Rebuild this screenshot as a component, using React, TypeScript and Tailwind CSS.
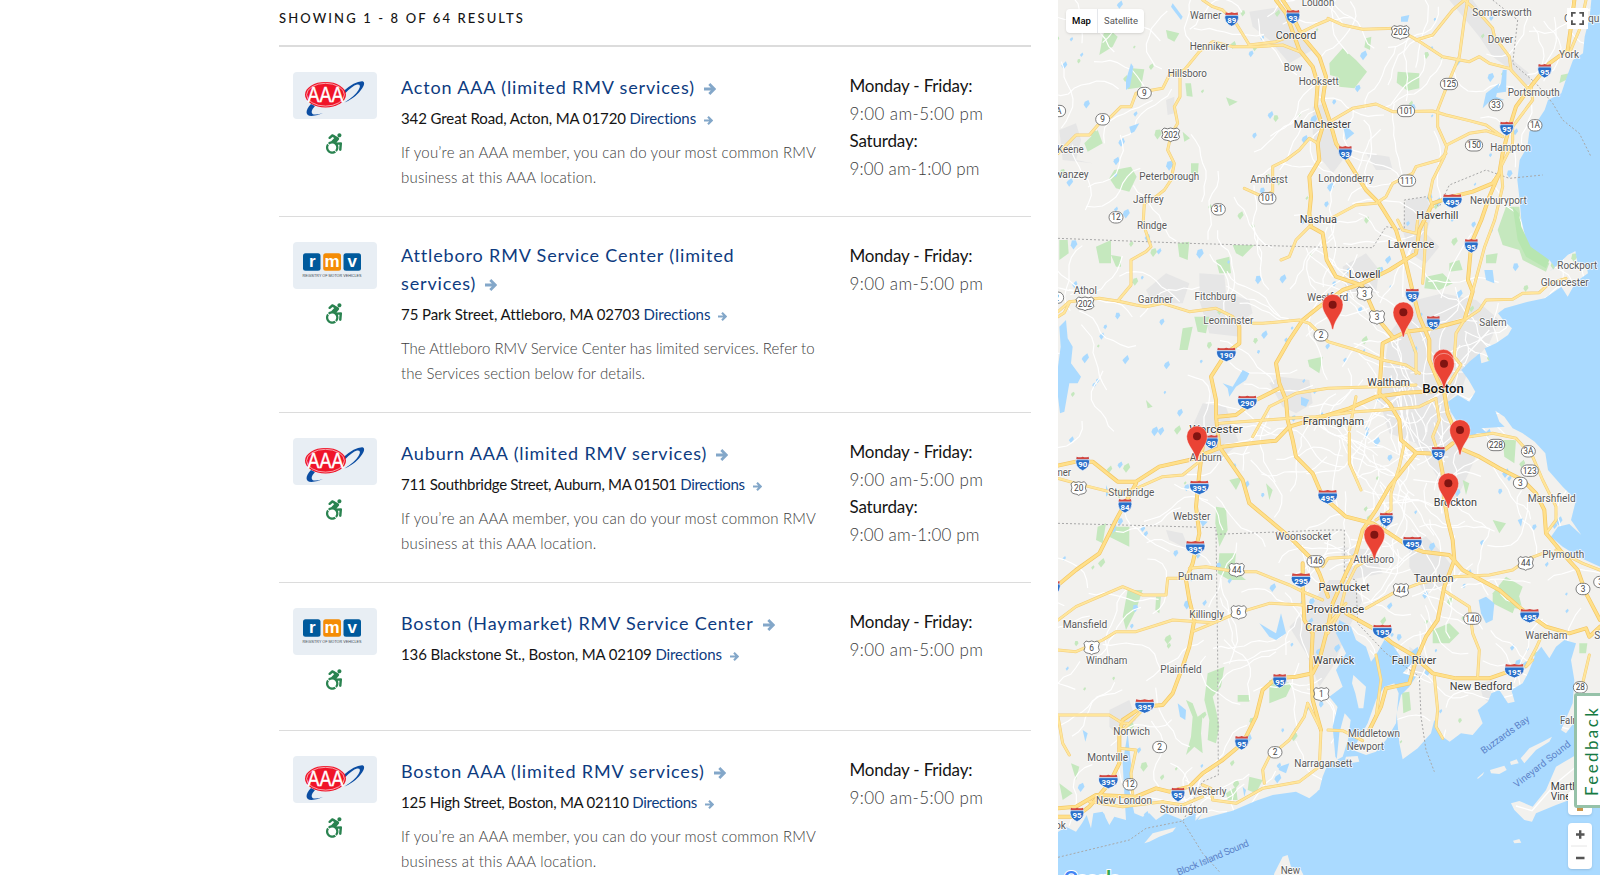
import { FaAccessibleIcon } from 'react-icons/fa';

type Pt = string;
type Kind = 'aaa' | 'rmv';

const weekdays = { days: 'Monday - Friday:', time: '9:00 am-5:00 pm', timeSpacing: 'tracking-[0.400px]' };
const saturday = { days: 'Saturday:', time: '9:00 am-1:00 pm', timeSpacing: 'tracking-[0.150px]' };
const aaaText = [
  'If you’re an AAA member, you can do your most common RMV',
  'business at this AAA location.',
];

const locations = [
  {
    kind: 'aaa' as Kind,
    title: ['Acton AAA (limited RMV services)'],
    address: '342 Great Road, Acton, MA 01720',
    addressSpacing: 'tracking-[-0.100px]',
    text: aaaText,
    hours: [weekdays, saturday],
    height: 'h-[170px]',
  },
  {
    kind: 'rmv' as Kind,
    title: ['Attleboro RMV Service Center (limited', 'services)'],
    address: '75 Park Street, Attleboro, MA 02703',
    addressSpacing: 'tracking-[-0.070px]',
    text: [
      'The Attleboro RMV Service Center has limited services. Refer to',
      'the Services section below for details.',
    ],
    hours: [weekdays],
    height: 'h-[196px]',
  },
  {
    kind: 'aaa' as Kind,
    title: ['Auburn AAA (limited RMV services)'],
    address: '711 Southbridge Street, Auburn, MA 01501',
    addressSpacing: 'tracking-[-0.290px]',
    text: aaaText,
    hours: [weekdays, saturday],
    height: 'h-[170px]',
  },
  {
    kind: 'rmv' as Kind,
    title: ['Boston (Haymarket) RMV Service Center'],
    address: '136 Blackstone St., Boston, MA 02109',
    addressSpacing: 'tracking-[-0.110px]',
    text: [],
    hours: [weekdays],
    height: 'h-[148px]',
  },
  {
    kind: 'aaa' as Kind,
    title: ['Boston AAA (limited RMV services)'],
    address: '125 High Street, Boston, MA 02110',
    addressSpacing: 'tracking-[-0.270px]',
    text: aaaText,
    hours: [weekdays],
    height: 'h-[170px]',
  },
];

// Map data, in a 1632 x 2625 space
const sea: Pt =
  '1606,0 1601,50 1586,110 1581,160 1551,180 1531,235 1516,280 1476,300 1466,330 1440,370 1420,395 1414,440 1391,480 1384,540 1391,600 1396,660 1408,710 1430,760 1480,780 1496,800 1480,815 1510,790 1535,765 1558,754 1564,785 1592,800 1596,820 1560,845 1535,890 1516,860 1466,895 1416,905 1346,925 1326,940 1346,965 1368,985 1356,1005 1320,1030 1286,1045 1301,1082 1276,1090 1271,1060 1240,1085 1216,1110 1238,1140 1258,1175 1240,1205 1205,1185 1176,1205 1184,1235 1215,1285 1250,1315 1262,1300 1296,1300 1276,1285 1346,1280 1330,1265 1318,1232 1345,1250 1370,1285 1400,1300 1436,1325 1468,1360 1476,1410 1520,1460 1560,1500 1545,1560 1576,1605 1540,1572 1506,1580 1485,1610 1520,1640 1576,1675 1632,1700 1640,1700 1640,0';
const southSea: Pt =
  '0,2500 30,2480 60,2495 78,2470 92,2445 105,2485 112,2440 140,2435 160,2475 175,2450 210,2460 205,2380 200,2290 215,2200 225,2290 220,2370 235,2440 260,2450 280,2440 300,2460 330,2440 380,2460 420,2435 418,2462 440,2440 425,2460 530,2432 600,2402 650,2385 720,2375 760,2395 790,2370 800,2330 816,2290 850,2285 880,2290 910,2285 905,2268 870,2270 860,2300 838,2270 830,2180 845,2120 820,2090 860,2060 840,2010 870,1960 840,1900 850,1860 885,1880 900,1920 930,1940 945,1985 960,1965 985,1920 1010,1935 1040,1980 1060,1960 1085,1940 1090,1965 1040,2020 1080,2030 1060,2060 1035,2085 1022,2140 1030,2230 1040,2278 1085,2245 1125,2200 1135,2160 1160,2210 1181,2225 1215,2200 1250,2205 1280,2170 1265,2130 1296,2105 1306,2080 1330,2070 1356,2110 1376,2105 1366,2070 1400,2050 1416,2020 1430,1985 1440,1960 1456,1940 1480,1975 1500,1940 1525,1920 1560,1930 1545,1980 1555,2040 1550,2110 1515,2190 1530,2200 1560,2160 1632,2150 1640,2625 0,2625';

const islands: Pt[] = [
  '985,2060 1015,2050 1028,2080 1020,2170 990,2220 960,2255 930,2265 890,2250 935,2170 960,2100',
  '892,2025 930,2060 922,2125 908,2125 898,2080 888,2050',
  '866,2140 884,2160 876,2220 860,2270 842,2280 850,2200',
  '1263,2335 1285,2315 1280,2325 1266,2336',
  '1302,2310 1345,2297 1352,2310 1330,2322 1305,2320',
  '1362,2285 1382,2278 1388,2290 1365,2295',
  '1394,2275 1420,2245 1460,2225 1488,2210 1480,2225 1440,2250 1405,2290',
  '1365,2410 1390,2403 1430,2420 1470,2370 1500,2300 1560,2265 1632,2270 1632,2400 1540,2400 1500,2415 1440,2440 1428,2465 1405,2460 1375,2430',
  '1371,2522 1390,2517 1396,2528 1375,2530',
  '265,2530 290,2500 360,2482 350,2495 310,2510 280,2525',
  '655,2620 680,2570 695,2565 705,2600 735,2610 750,2640 650,2640',
];

const urban: Pt[] = [
  '580,35 680,20 700,60 740,110 770,150 700,190 640,120 590,80',
  '770,320 810,310 830,400 860,480 830,520 790,470 770,400',
  '1180,0 1250,0 1310,80 1330,130 1370,180 1420,220 1430,280 1380,220 1310,170 1270,110',
  '10,390 60,370 75,420 60,480 110,490 20,480',
  '330,300 355,290 355,340 335,345',
  '930,460 1000,470 1010,510 960,510',
  '1050,600 1110,590 1130,640 1110,700 1150,740 1110,790 1060,760 1040,690',
  '430,820 505,825 510,880 580,900 590,940 560,960 550,1010 460,1000 430,900',
  '270,870 330,820 400,850 380,910 290,910',
  '860,800 930,760 970,810 960,880 870,880',
  '1080,900 1160,880 1260,900 1330,960 1300,1030 1240,1100 1220,1160 1180,1200 1200,1330 1250,1360 1230,1400 1150,1440 1080,1330 1000,1300 970,1200 1000,1000',
  '670,1130 760,1140 770,1210 720,1240 680,1220 640,1150',
  '400,1300 440,1210 510,1220 530,1280 550,1330 490,1380 430,1370',
  '1060,1630 1110,1610 1150,1650 1190,1700 1170,1760 1100,1770 1060,1700',
  '700,1880 760,1820 820,1740 880,1740 920,1800 880,1880 830,2000 790,2060 750,1960',
  '850,1640 950,1650 980,1720 880,1740',
  '330,1590 380,1600 400,1650 340,1620',
  '160,2130 220,2100 240,2160 190,2210 160,2180',
  '1270,2050 1310,2040 1300,2110 1280,2090',
  '1060,1940 1120,1980 1100,2030 1060,2020',
  '1160,1350 1260,1370 1210,1480 1170,1530 1140,1440',
];

const parks: Pt[] = [
  '228,205 265,208 255,262 215,268 218,230',
  '175,510 225,500 242,530 220,575 180,565 160,535',
  '330,90 370,100 355,125 335,115',
  '388,250 405,250 410,290 392,288',
  '85,430 125,390 140,430 95,455',
  '150,80 185,110 170,140 130,165 140,110',
  '510,292 545,305 520,318',
  '380,395 402,415 385,425',
  '405,490 428,490 425,528 405,520',
  '820,190 860,145 900,180 933,215 895,265 850,260 840,230 822,225',
  '1025,215 1090,220 1090,265 1055,272 1022,248',
  '930,115 946,110 942,150 925,142',
  '1515,225 1540,220 1530,240 1510,250',
  '1350,620 1390,620 1396,680 1420,750 1480,790 1470,815 1400,780 1390,750 1340,735 1325,690',
  '1110,830 1160,820 1190,850 1150,870 1105,865',
  '1290,765 1325,760 1320,790 1290,790',
  '1180,790 1210,780 1220,810 1180,815',
  '120,740 165,720 165,790 130,790',
  '165,765 195,770 195,800 180,800',
  '10,720 35,720 38,760 10,780',
  '365,730 400,725 395,780 370,770',
  '530,735 595,735 560,770 540,760',
  '480,780 520,770 525,820 490,820',
  '380,985 410,980 395,1050 370,1050',
  '415,950 460,950 450,1000 425,995',
  '755,1080 800,1070 790,1120 760,1100',
  '270,1200 290,1220 275,1225',
  '125,1580 150,1570 140,1630 120,1620',
  '170,1580 220,1580 220,1640 160,1610',
  '480,1520 510,1525 515,1590 490,1640 478,1570',
  '490,1660 540,1660 535,1710 570,1740 520,1740 485,1720',
  '215,1770 260,1770 240,1830 210,1890 200,1850',
  '300,1790 315,1790 310,1840 298,1830',
  '520,1440 560,1430 540,1470',
  '630,1450 650,1470 640,1500',
  '1340,1320 1380,1320 1375,1390 1345,1370',
  '1220,1440 1240,1450 1230,1485',
  '1310,1560 1350,1570 1330,1600',
  '1310,1780 1350,1730 1400,1760 1370,1840 1310,1810',
  '1130,1890 1180,1870 1210,1900 1180,1930 1130,1930',
  '1350,1790 1390,1790 1400,1830 1360,1820',
  '1570,1930 1594,1930 1590,1960 1570,1960',
  '455,2020 505,2000 495,2060 470,2090 480,2130 490,2180 480,2230 455,2220 460,2160 445,2100',
  '390,2100 410,2110 425,2150 440,2140 435,2200 440,2260 415,2240 390,2265 405,2210 410,2150',
  '640,2040 710,2050 690,2090 640,2110',
  '545,2085 580,2085 580,2105 545,2105',
  '10,2350 50,2380 20,2400',
  '45,2290 70,2300 60,2340',
  '510,2380 540,2360 545,2400 515,2400',
  '580,2330 620,2340 600,2380 575,2370',
  '1038,2078 1060,2075 1065,2130 1042,2140',
  '1430,1960 1460,1950 1450,1990',
];

const lakes: Pt[] = [
  '10,980 30,960 35,1015 50,1040 45,1090 75,1130 65,1150 40,1150 25,1235 12,1240 6,1190 6,1100 14,1040',
  '500,1150 530,1160 560,1110 580,1120 570,1140 540,1160 520,1190 515,1165',
  '210,240 225,190 232,200 222,260 210,270',
  '350,10 380,50 375,60 345,20',
  '220,380 250,370 235,395 225,400',
  '1290,280 1330,250 1320,290 1345,300 1300,305 1280,325',
  '1035,50 1060,45 1055,65 1035,65',
  '1285,810 1310,810 1315,850 1290,840',
  '1340,210 1352,210 1350,275 1318,280 1335,250',
  '610,1870 660,1900 675,1840 690,1900 660,1920 640,1910',
  '1268,1800 1290,1790 1315,1810 1310,1860 1290,1870 1275,1840',
  '170,1560 180,1590 170,1600',
  '365,2110 390,2130 388,2160 372,2150',
  '670,2300 700,2290 690,2320 668,2310',
  '560,2360 570,2370 565,2390',
  '80,2190 95,2200 88,2225',
  '735,1190 760,1200 750,1220 735,1215',
  '860,370 895,400 870,420',
  '150,1455 160,1480 150,1490',
  '430,1560 455,1565 440,1580',
  '1385,1560 1400,1555 1395,1580',
];

// main roads
const roads: Pt[] = [
  '440,0 470,20 500,30 540,70 580,135',
  '6,460 60,405 100,405 130,370 165,350 195,320 225,320 240,280 290,270 320,265 340,225 385,210 430,155 470,125 530,140 600,140 680,135 730,155',
  '372,215 372,290 355,320 365,370 345,405 335,450 355,490 345,540 325,570 300,590 265,610 262,660 268,690 285,740 270,755 225,780 225,855 185,903',
  '580,135 660,125 740,95 780,75 816,60',
  '822,365 890,325 960,312 1010,335 1130,333 1170,345 1240,362 1290,375 1340,410',
  '816,55 860,75 920,88 1020,85 1080,118 1160,170 1240,185 1270,170 1300,190 1360,205',
  '1080,120 1130,105 1190,30 1225,0',
  '1235,0 1225,60 1210,170 1180,240 1145,330 1145,380 1172,440 1165,470 1130,540 1120,590 1130,620',
  '1225,0 1270,40 1310,85 1315,110 1360,170 1365,210 1420,270',
  '1425,260 1430,300 1370,380 1370,430 1335,500 1340,560 1316,660 1286,740 1251,870',
  '1590,0 1570,90 1540,160',
  '816,660 900,615 960,610 990,590 1010,550 1070,520 1080,500 1150,480 1170,460',
  '1172,435 1240,400 1290,392 1340,410',
  '565,565 620,590 650,575 650,500 690,480 730,450 760,415 785,430',
  '675,780 700,770 720,720 760,680',
  '6,935 40,905 130,895 185,903 240,915 270,920 320,910 400,935 480,925 530,950 550,980',
  '6,950 25,938 40,908',
  '590,970 620,970 730,960 760,970 816,1025 900,1050 980,1080 1050,1095 1090,1120',
  '490,1270 600,1262 700,1255 780,1250 900,1235 980,1230 1090,1220 1140,1195',
  '590,1310 640,1220 720,1180 816,1165 960,1160 1080,1155',
  '1225,960 1270,930 1290,900 1370,898 1400,880 1450,878 1480,850 1530,835',
  '1225,960 1200,1000 1195,1070 1215,1095 1180,1150',
  '1045,1330 1030,1400 1005,1480 1005,1530 960,1560',
  '1240,1310 1310,1300 1380,1315 1430,1370 1460,1440 1500,1520 1500,1560 1470,1600',
  '1195,1730 1300,1725 1370,1710 1420,1675 1460,1660 1500,1662',
  '930,1825 1010,1780 1090,1750 1195,1730',
  '1500,1650 1580,1690 1632,1710',
  '1170,1775 1240,1820 1250,1900 1270,1950 1265,2030',
  '6,1435 60,1450 120,1465 160,1475 230,1470 320,1430 380,1425 430,1385',
  '400,1705 450,1700 540,1715 600,1715 700,1755 740,1775 800,1800',
  '410,1895 470,1870 540,1840 640,1810 740,1815',
  '6,1860 60,1820 200,1760 260,1785 330,1785 335,1735 390,1735',
  '6,1950 60,1955 140,1920 180,1895 240,1895 350,1860 470,1868',
  '6,2145 90,2145 160,2145 200,2170 215,2170',
  '6,2150 20,2230 40,2265',
  '320,2405 380,2415 440,2390',
  '100,2405 200,2420 320,2405',
  '440,2355 465,2365 470,2400 540,2410 620,2365 730,2345 790,2300 795,2190 755,2110',
  '625,2350 620,2310 640,2270 700,2220 745,2150 755,2110',
  '190,2245 240,2250 225,2320 230,2380',
  '816,1900 850,1840 870,1760 900,1700 950,1670',
  '800,1700 816,1675 900,1670',
  '780,1890 820,1870 870,1810',
  '816,2190 860,2192 920,2222',
  '1135,2030 1145,2130 1140,2180 1160,2215',
  '960,1965 975,2040 960,2150',
  '1050,980 1080,1060 1080,1120',
  '1140,1200 1150,1260 1130,1310 1140,1340',
  '880,1300 880,1390 915,1470',
  '900,1190 880,1290',
  '1600,1965 1580,2050',
  '1430,1980 1410,2000 1440,1945 1460,1900',
  '1025,660 1040,690 1080,700 1085,660',
  '1110,670 1105,780 1100,850',
  '260,2130 190,2200',
];

const highways: Pt[] = [
  '660,0 690,40 730,150 770,200 785,250 780,320 800,380 785,430 790,480 760,530 765,590 760,640 765,680 800,700 812,780 840,830 900,850 920,860 960,950 1010,1010',
  '680,0 700,30 740,110 790,170 810,230 800,300 822,365 840,430 880,490 930,570 970,610 1020,690 1050,790 1069,870 1090,950 1120,1020 1120,1080 1145,1140 1165,1180 1175,1240 1200,1300 1212,1345 1270,1370 1330,1405 1400,1440 1440,1480 1465,1530 1470,1600 1520,1660 1565,1710 1590,1780 1632,1860',
  '1555,0 1545,80 1535,150 1480,190 1420,265 1380,320 1355,400 1340,460 1330,520 1300,590 1276,660 1246,730 1236,840 1250,875 1225,960 1170,975 1130,985 1050,995 980,1030 975,1100 970,1180 1000,1210 1030,1260 1035,1320 1080,1358 1150,1362 1190,1330',
  '1330,520 1310,550 1250,575 1190,590 1130,610 1090,690 1080,760 1000,810 920,850 860,870 820,900 790,920 740,960 700,1020 660,1090 670,1150 690,1200 695,1260 710,1320 720,1370 770,1420 800,1490 870,1550 950,1570 1000,1600 1060,1640 1100,1655 1180,1665 1220,1710 1330,1770 1400,1830 1470,1880 1540,1900 1590,1885 1600,1910 1632,1880',
  '550,980 550,1030 510,1060 465,1130 480,1200 480,1250 490,1340 560,1440 580,1510 640,1560 700,1610 740,1650 770,1680 790,1720 816,1790',
  '485,1250 540,1245 600,1200 670,1165',
  '6,1397 60,1385 110,1385 185,1445 240,1445 310,1400 400,1380 500,1340 600,1328 660,1322 700,1280 816,1245 880,1225 960,1190 1050,1178 1160,1172',
  '1080,1360 1000,1460 960,1530 920,1590 900,1660 870,1720 830,1810 816,1880 790,1980 770,2020 720,2030 660,2035 620,2070 600,2150 560,2230 500,2280 440,2320 400,2360 340,2375 300,2365 240,2390 120,2385 60,2420 6,2425',
  '1150,1365 1160,1420 1165,1500 1175,1560 1190,1620 1195,1680 1165,1760 1145,1860 1110,1910 1080,1980 1060,2050 990,2065 975,2120 940,2190',
  '870,1840 960,1890 1010,1930 1070,1965 1130,2020 1200,2035 1300,2035 1400,2000',
  '440,1340 430,1420 420,1520 430,1600 410,1690 390,1740 400,1800 415,1860 400,1940 380,2000 350,2080 320,2115 260,2120 200,2160 190,2200 190,2290 160,2350 100,2420 60,2450 6,2450',
  '240,1450 180,1560 130,1660 60,1710 6,1755',
  '740,1690 740,1760 745,1860 770,1900 765,2000 770,2100 795,2190',
];

const borders: Pt[] = [
  '6,715 400,730 816,742 950,743 990,680 1045,690 1045,600 1110,590 1150,620 1180,555 1290,510 1360,535 1460,525',
  '6,1570 200,1575 480,1583 485,1965 487,2325 440,2345 380,2465',
  '480,1603 816,1590 865,1590 865,1730 900,1740 905,1870 990,1960 1090,2030 1095,2150 1110,2250 1135,2315',
  '1310,0 1385,60 1370,190 1440,250 1490,310 1520,360 1570,400 1605,470',
  '6,2572 220,2520 270,2485 380,2463 440,2560 490,2615',
];

type Label = [string, number, number, number, number?];
const labels: Label[] = [
  ['Warner', 449, 56, 94], ['Concord', 720, 116, 122, 34], ['Henniker', 460, 151, 118], ['Bow', 711, 212, 56],
  ['Hooksett', 788, 254, 120], ['Hillsboro', 394, 231, 118], ['Manchester', 799, 384, 172, 34], ['Keene', 43, 460, 80],
  ['Swanzey', 38, 534, 120], ['Peterborough', 340, 540, 180], ['Amherst', 639, 550, 112], ['Londonderry', 870, 547, 166],
  ['Jaffrey', 277, 610, 92], ['Nashua', 787, 670, 112, 34], ['Rindge', 288, 688, 90], ['Loudon', 786, 18, 98],
  ['Somersworth', 1338, 48, 178], ['Ogunquit', 1586, 66, 124], ['Dover', 1333, 129, 76], ['York', 1539, 174, 60],
  ['Portsmouth', 1433, 288, 156], ['Hampton', 1364, 454, 122], ['Newburyport', 1327, 612, 170], ['Haverhill', 1144, 658, 126, 34],
  ['Athol', 88, 882, 70], ['Gardner', 298, 908, 105], ['Fitchburg', 478, 899, 125], ['Leominster', 517, 971, 150],
  ['Westford', 815, 903, 124], ['Worcester', 480, 1298, 160, 34], ['Framingham', 832, 1276, 184, 34], ['Lawrence', 1065, 744, 140, 33],
  ['Lowell', 926, 835, 95, 33], ['Rockport', 1564, 806, 120], ['Gloucester', 1526, 857, 144], ['Salem', 1311, 978, 82],
  ['Waltham', 998, 1157, 128, 33], ['Boston', 1161, 1179, 125, 40], ['Auburn', 449, 1382, 96], ['Palmer', 0, 1428, 90],
  ['Sturbridge', 226, 1488, 138], ['Webster', 407, 1560, 112], ['Woonsocket', 742, 1619, 168], ['Putnam', 418, 1739, 104],
  ['Killingly', 452, 1853, 104], ['Mansfield', 87, 1883, 134], ['Windham', 152, 1992, 124], ['Providence', 838, 1839, 174, 34],
  ['Cranston', 814, 1894, 132, 34], ['Pawtucket', 864, 1774, 153, 34], ['Brockton', 1198, 1519, 130, 34], ['Marshfield', 1487, 1507, 144],
  ['Plymouth', 1522, 1674, 126], ['Attleboro', 953, 1689, 122], ['Taunton', 1133, 1746, 120, 34], ['Wareham', 1471, 1917, 126],
  ['Sandwich', 1680, 1917, 130], ['Plainfield', 375, 2018, 124], ['Warwick', 833, 1991, 124, 34], ['Norwich', 227, 2206, 110],
  ['Montville', 155, 2282, 122], ['New London', 204, 2412, 168], ['Stonington', 383, 2438, 144], ['Westerly', 454, 2386, 114],
  ['Narragansett', 802, 2300, 174], ['Old Saybrook', -60, 2487, 180], ['New', 703, 2623, 58], ['Fall River', 1074, 1991, 134, 33],
  ['New Bedford', 1275, 2071, 188, 34], ['Middletown', 954, 2212, 156], ['Newport', 928, 2249, 112], ['Falmouth', 1572, 2171, 120],
  ['Martha’s', 1543, 2369, 118, 33], ['Vineyard', 1543, 2400, 118, 33],
];

const interstates: [string, number, number][] = [
  ['89', 527, 57], ['93', 711, 50], ['95', 1466, 212], ['95', 1352, 385], ['93', 868, 458], ['495', 1189, 603],
  ['95', 1246, 737], ['93', 1069, 886], ['95', 1132, 968], ['190', 511, 1063], ['290', 574, 1207], ['90', 466, 1325],
  ['90', 80, 1390], ['84', 207, 1517], ['395', 430, 1462], ['395', 418, 1643], ['84', -8, 1763], ['495', 815, 1490],
  ['95', 991, 1558], ['495', 1069, 1630], ['93', 1147, 1360], ['295', 735, 1740], ['195', 979, 1894], ['495', 1421, 1847],
  ['195', 1375, 2012], ['395', 266, 2118], ['95', 671, 2042], ['95', 557, 2228], ['395', 157, 2344], ['95', 366, 2383],
  ['95', 63, 2443],
];

const usRoutes: [string, number, number][] = [
  ['202', 344, 404], ['202', 1033, 97], ['202', 87, 911], ['3', 926, 881], ['3', 963, 952], ['20', 68, 1465],
  ['44', 542, 1710], ['6', 548, 1837], ['6', 107, 1943], ['44', 1035, 1771], ['44', 1409, 1690], ['1', 796, 2083],
];

const stateRoutes: [string, number, number][] = [
  ['9', 265, 279], ['9', 140, 358], ['A', 8, 333], ['12', 180, 652], ['31', 487, 628], ['101', 634, 595],
  ['125', 1179, 252], ['33', 1320, 315], ['101', 1050, 333], ['1A', 1437, 376], ['150', 1254, 436], ['111', 1053, 542],
  ['2', 795, 1006], ['2', 2, 893], ['228', 1320, 1335], ['3A', 1417, 1354], ['123', 1421, 1412], ['3', 1393, 1449],
  ['146', 779, 1684], ['3', 1581, 1767], ['3', 1634, 1746], ['140', 1249, 1856], ['2', 311, 2241], ['12', 222, 2353],
  ['2', 657, 2257], ['28', 1573, 2062],
];

const pins = [[423, 1380], [830, 985], [1042, 1008], [1162, 1150], [1164, 1162], [1212, 1361], [1177, 1521], [955, 1675]];

// local streets and ponds are filler, so a small seeded generator draws them
let seed = 11;
const rand = () => {
  seed = (seed * 16807) % 2147483647;
  return seed / 2147483647;
};

const streets = Array.from({ length: 320 }, (_, i) => {
  const metro = i % 4 === 0;
  let x = metro ? 850 + rand() * 400 : rand() * 1632;
  let y = metro ? 850 + rand() * 1050 : rand() * 2500;
  let a = rand() * 6.28;
  let d = `M${x.toFixed(0)} ${y.toFixed(0)}`;
  for (let n = 0; n < 9; n++) {
    a += (rand() - 0.5) * 1.1;
    x += Math.cos(a) * 24;
    y += Math.sin(a) * 24;
    d += `L${x.toFixed(0)} ${y.toFixed(0)}`;
  }
  return d;
});

const patches = Array.from({ length: 320 }, (_, i) => {
  const x = rand() * 1632;
  const y = rand() * 2450;
  const s = 4 + rand() * 9;
  return { park: i % 3 === 0, d: `M${x} ${y}l${s} ${-s * rand()}l${s * 0.4} ${s}l${-s} ${s * 1.3}l${-s * 0.7} ${-s}Z` };
});

const Interstate = ({ label, x, y }: { label: string; x: number; y: number }) => (
  <g transform={`translate(${x} ${y}) scale(${label.length > 2 ? 1.42 : 1} 1)`}>
    <path d="M-18 -18Q0 -14 18 -18Q24 -4 17 9Q10 18 0 22Q-10 18 -17 9Q-24 -4 -18 -18Z" fill="#2a6fc9" stroke="#fff" strokeWidth="2" />
    <path d="M-18 -20Q-9 -16 0 -20Q9 -16 18 -20L19 -12H-19Z" fill="#d2463f" />
    <path d="M-20 -11H20" stroke="#fff" strokeWidth="2" />
    <text y="12" textAnchor="middle" textLength={label.length > 2 ? 29 : 27} lengthAdjust="spacingAndGlyphs" fontSize="24" fontWeight="700" fill="#fff">{label}</text>
  </g>
);

const UsRoute = ({ label, x, y }: { label: string; x: number; y: number }) => (
  <g transform={`translate(${x} ${y})`}>
    <path
      d="M-17 -20Q-8 -15 0 -20Q8 -15 17 -20L23 -13Q17 0 23 8Q20 17 10 17Q5 17 0 21Q-5 17 -10 17Q-20 17 -23 8Q-17 0 -23 -13Z"
      transform={label.length > 2 ? 'scale(1.16 1)' : undefined}
      fill="#fff" stroke="#666" strokeWidth="2.5"
    />
    <text y="9" textAnchor="middle" fontSize="25" fill="#444">{label}</text>
  </g>
);

const StateRoute = ({ label, x, y }: { label: string; x: number; y: number }) => {
  const w = label.length > 2 ? 52 : 42;
  return (
    <g transform={`translate(${x} ${y})`}>
      <rect x={-w / 2} y="-17" width={w} height="34" rx="17" fill="#fff" stroke="#666" strokeWidth="2.5" />
      <text y="9" textAnchor="middle" fontSize="25" fill="#444">{label}</text>
    </g>
  );
};

function MapCanvas() {
  return (
    <svg viewBox="6 0 1626 2625" className="block h-[875px] w-[542px] bg-[#f2f1ee] font-['Roboto',sans-serif]">
      <g fill="#e6e6e6">{urban.map((p) => <polygon key={p} points={p} />)}</g>
      <g fill="#c5e8be">{parks.map((p) => <polygon key={p} points={p} />)}</g>
      {patches.map((p) => <path key={p.d} d={p.d} fill={p.park ? '#c5e8be' : '#aadaff'} />)}
      <g fill="none" stroke="#fff" strokeWidth="3.5" strokeLinejoin="round">{streets.map((d) => <path key={d} d={d} />)}</g>
      <g fill="#aadaff">
        {lakes.map((p) => <polygon key={p} points={p} />)}
        <polygon points={sea} />
        <polygon points={southSea} />
      </g>
      <g fill="#f2f1ee">{islands.map((p) => <polygon key={p} points={p} />)}</g>
      <polygon points="1370,620 1388,640 1396,680 1424,740 1480,780 1470,805 1410,770 1385,720" fill="#b7e6b0" />
      <path d="M1380 2418L1428 2432L1500 2350L1560 2300M1250 610L1400 600M1300 990L1200 1100" fill="none" stroke="#fff" strokeWidth="4" />
      <g fill="none" stroke="#a8a8a8" strokeWidth="3" strokeDasharray="6 6">{borders.map((p) => <polyline key={p} points={p} />)}</g>
      <g fill="none" strokeLinejoin="round" strokeLinecap="round">
        <g stroke="#f3cd78" strokeWidth="9">{roads.map((p) => <polyline key={p} points={p} />)}</g>
        <g stroke="#f3c766" strokeWidth="12">{highways.map((p) => <polyline key={p} points={p} />)}</g>
        <g stroke="#ffe69c" strokeWidth="6">{roads.map((p) => <polyline key={p} points={p} />)}</g>
        <g stroke="#ffe08a" strokeWidth="8">{highways.map((p) => <polyline key={p} points={p} />)}</g>
      </g>
      {interstates.map(([l, x, y]) => <Interstate key={`${l}-${x}-${y}`} label={l} x={x} y={y} />)}
      {usRoutes.map(([l, x, y]) => <UsRoute key={`${l}-${x}-${y}`} label={l} x={x} y={y} />)}
      {stateRoutes.map(([l, x, y]) => <StateRoute key={`${l}-${x}-${y}`} label={l} x={x} y={y} />)}
      <g textAnchor="middle" stroke="#fff" strokeWidth="5" strokeLinejoin="round" strokeOpacity="0.85" paintOrder="stroke">
        {labels.map(([t, x, y, w, s = 30]) => (
          <text key={t} x={x} y={y} textLength={w} lengthAdjust="spacingAndGlyphs" fontSize={s} fontWeight={s === 40 ? 500 : 400} fill={s === 40 ? '#111' : s > 30 ? '#3c3c3c' : '#5a5a5a'}>
            {t}
          </text>
        ))}
      </g>
      <g textAnchor="middle" fontSize="29" fill="#5b82c8">
        <text transform="translate(1353 2212) rotate(-36)" textLength="172">Buzzards Bay</text>
        <text transform="translate(1464 2300) rotate(-38)" textLength="208">Vineyard Sound</text>
        <text transform="translate(474 2582) rotate(-23)" textLength="232">Block Island Sound</text>
      </g>
      <text x="22" y="2660" fontSize="68" fontWeight="500" textLength="172" stroke="#fff" strokeWidth="6" paintOrder="stroke">
        <tspan fill="#4285f4">G</tspan>
        <tspan fill="#ea4335">o</tspan>
        <tspan fill="#fbbc05">o</tspan>
        <tspan fill="#4285f4">g</tspan>
        <tspan fill="#34a853">l</tspan>
        <tspan fill="#ea4335">e</tspan>
      </text>
      {pins.map(([x, y]) => (
        <g key={`${x}-${y}`} transform={`translate(${x} ${y})`}>
          <path d="M-2 3C-6 -30 -31 -43 -31 -71A31 31 0 1 1 31 -71C31 -43 6 -30 2 3Z" fill="#ea4335" stroke="#fff" strokeWidth="1.5" strokeOpacity="0.8" />
          <circle cy="-71" r="12" fill="#811411" />
        </g>
      ))}
    </svg>
  );
}

const AaaLogo = () => (
  <svg viewBox="0 0 84 47" className="h-[47px] w-[84px]">
    <path d="M50 19.500Q62 9 69.500 9.300Q74 11 66 20.500Q60 27 51.500 30.500Q62 24 65.500 18Q69 12 64 12.500Q59 14 52.500 21Z" fill="#0b4da2" />
    <path d="M18 32C12 38 12 44 18.500 44Q24 44 30 41Q22 43.500 19.500 42Q17 39.500 22 34Z" fill="#0b4da2" />
    <ellipse cx="32.500" cy="22.700" rx="20.500" ry="12.800" fill="#f01428" />
    <ellipse cx="32.500" cy="22.700" rx="18.900" ry="11.400" fill="none" stroke="#fff" strokeWidth="0.600" />
    <text x="32.500" y="30.200" textAnchor="middle" fontSize="21.500" fontWeight="400" fontFamily="Liberation Sans" textLength="36" lengthAdjust="spacingAndGlyphs" fill="#fff" stroke="#fff" strokeWidth="0.400">AAA</text>
  </svg>
);

const RmvLogo = () => (
  <svg viewBox="0 0 84 47" className="h-[47px] w-[84px]">
    <rect x="10" y="11.300" width="17.500" height="17.500" rx="2.500" fill="#005a9c" />
    <rect x="30.200" y="11.300" width="17.800" height="17.500" rx="2.500" fill="#f48c06" />
    <rect x="50.500" y="11.300" width="17.500" height="17.500" rx="2.500" fill="#005a9c" />
    <g fontFamily="Liberation Sans" fontWeight="700" fontSize="17" fill="#fff" textAnchor="middle">
      <text x="19.200" y="25">r</text>
      <text x="39.100" y="25">m</text>
      <text x="59.200" y="25">v</text>
    </g>
    <text x="9.500" y="34.600" fontSize="3.400" fontFamily="Liberation Sans" textLength="59" lengthAdjust="spacingAndGlyphs" fill="#3d4650">REGISTRY OF MOTOR VEHICLES</text>
  </svg>
);

const Arrow = ({ className }: { className: string }) => (
  <svg viewBox="0 0 12 12" className={`inline-block fill-none stroke-[#83a7c9] ${className}`} strokeWidth="2.800">
    <path d="M0 6H10M5.300 1L10.300 6L5.300 11" />
  </svg>
);

export default function App() {
  return (
    <div className="relative flex h-[875px] w-[1600px] overflow-hidden bg-white font-['Lato',sans-serif]">
      <main className="ml-[279px] w-[752px] shrink-0">
        <div className="h-[47px] border-b-2 border-[#dcdcdc] pt-[9px] text-[13px] leading-[18px] font-medium tracking-[2.120px] whitespace-nowrap text-[#141414] uppercase">
          Showing 1 - 8 of 64 results
        </div>
        {locations.map((item) => (
          <section key={item.address} className={`flex border-b border-[#dcdcdc] pt-[25px] ${item.height}`}>
            <div className="ml-[13.500px] flex w-[84px] shrink-0 flex-col items-center">
              <div className="h-[47px] rounded bg-[#e8eef4]">{item.kind === 'aaa' ? <AaaLogo /> : <RmvLogo />}</div>
              <FaAccessibleIcon className="mt-[14px] mr-[2px] h-[21px] w-[18px] text-[#2a8350]" />
            </div>
            <div className={`ml-[24.500px] w-[448.500px] shrink-0 whitespace-nowrap ${item.title.length > 1 ? '' : 'pt-[1.500px]'}`}>
              <h2 className="text-[18px] leading-[27.500px] tracking-[0.850px] text-[#0d3b80]">
                {item.title.map((line, i) => (
                  <span key={line} className="block">
                    {line}
                    {i === item.title.length - 1 && <Arrow className="ml-[9px] h-3 w-3" />}
                  </span>
                ))}
              </h2>
              <p className={`mt-1 text-[15px] leading-[27px] text-[#141414] ${item.addressSpacing}`}>
                {item.address} <span className="text-[#0d3b80]">Directions</span>
                <Arrow className="ml-2 h-[9px] w-[9px]" />
              </p>
              <div className={`mt-[7.500px] text-[15px] leading-[25px] font-light text-[#3c3c3c] ${item.kind === 'aaa' ? 'tracking-[0.185px]' : 'tracking-[0.030px]'}`}>
                {item.text.map((line) => <p key={line}>{line}</p>)}
              </div>
            </div>
            <dl className="text-[17px] leading-[27.700px] whitespace-nowrap">
              {item.hours.map((h) => (
                <div key={h.days}>
                  <dt className="tracking-[-0.180px] text-[#141414]">{h.days}</dt>
                  <dd className={`font-light text-[#3c3c3c] ${h.timeSpacing}`}>{h.time}</dd>
                </div>
              ))}
            </dl>
          </section>
        ))}
      </main>

      <aside className="relative ml-[27px] h-[875px] w-[542px] shrink-0 overflow-hidden">
        <MapCanvas />
        <div className="absolute top-[9px] left-2 flex h-6 w-[78px] items-center rounded-sm bg-white font-['Roboto',sans-serif] text-[9.500px] shadow">
          <span className="w-8 border-r border-gray-200 text-center leading-6 font-medium text-black">Map</span>
          <span className="flex-1 text-center leading-6 text-[#565656]">Satellite</span>
        </div>
        <div className="absolute top-2 right-[12px] flex h-[21px] w-[21px] items-center justify-center bg-white">
          <svg viewBox="0 0 14 14" className="h-[13px] w-[13px] fill-none stroke-[#555]" strokeWidth="2">
            <path d="M1 5V1H5M9 1H13V5M13 9V13H9M5 13H1V9" />
          </svg>
        </div>
        <div className="absolute right-2 bottom-[60px] flex h-6 w-6 items-end justify-center rounded-sm bg-white pb-1 shadow">
          <span className="h-1.5 w-1.5 bg-[#c9954a]" />
        </div>
        <div className="absolute right-2 bottom-[6px] flex h-[46px] w-6 flex-col items-center rounded-sm bg-white shadow">
          <svg viewBox="0 0 24 46" className="h-[46px] w-6 fill-none stroke-[#555]" strokeWidth="2.4">
            <path d="M8 11.500H16.500M12.200 7.200V15.700M8 35H16.500" />
            <path d="M3 23H19" stroke="#e6e6e6" strokeWidth="1" />
          </svg>
        </div>
        <button className="absolute top-[693px] -right-[10px] flex h-[115px] w-[36px] rotate-180 items-center justify-center rounded-r-[3px] border-[3px] border-[#96c2a9] bg-white text-[17px] tracking-[2.400px] text-[#167a43] [writing-mode:vertical-rl]">
          Feedback
        </button>
      </aside>
    </div>
  );
}
